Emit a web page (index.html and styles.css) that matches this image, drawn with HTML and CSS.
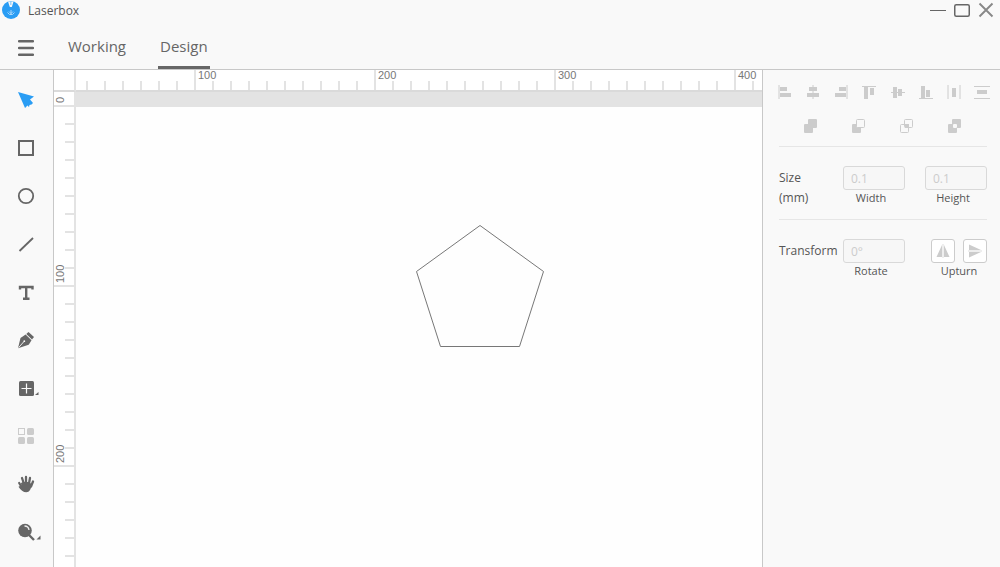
FILE: index.html
```html
<!DOCTYPE html>
<html lang="en">
<head>
<meta charset="utf-8">
<meta name="viewport" content="width=device-width, initial-scale=1">
<title>Laserbox</title>
<link rel="stylesheet" href="styles.css">
</head>
<body>
<div class="app">
  <header class="header">
    <div class="titlebar">
      <svg class="logo" width="18" height="18" viewBox="0 0 18 18" aria-hidden="true">
        <circle cx="9" cy="9" r="9" fill="#2a9df4"/>
        <path d="M6 0.5h5.5L9.8 6h-2z" fill="#f9f9f9"/>
        <path d="M8.2 0h1.2v4h-1.2z" fill="#8fcbf8"/>
        <path d="M9 9v5M5.500 11.500l2 2h3l2-2M7 10.500l2 2 2-2" fill="none" stroke="#a9d8fb"/>
      </svg>
      <span class="app-name">Laserbox</span>
      <div class="window-controls">
        <button class="icon-btn" aria-label="Minimize"><svg width="16" height="16"><path d="M0 8.500h16" stroke="#666"/></svg></button>
        <button class="icon-btn" aria-label="Maximize"><svg width="16" height="16"><rect x="0.750" y="2.750" width="14.500" height="11.500" rx="1.500" fill="none" stroke="#666" stroke-width="1.500"/></svg></button>
        <button class="icon-btn" aria-label="Close"><svg width="16" height="16"><path d="M1.500 1.500l13 13M14.500 1.500l-13 13" stroke="#888" stroke-width="1.900"/></svg></button>
      </div>
    </div>
    <nav class="tabs">
      <button class="icon-btn menu" aria-label="Menu"><svg width="16" height="16"><path d="M1 1.200h14M1 8h14M1 14.800h14" stroke="#666" stroke-width="2.400" stroke-linecap="round"/></svg></button>
      <a class="tab" href="#working">Working</a>
      <a class="tab active" href="#design">Design</a>
    </nav>
  </header>

  <div class="workspace">
    <aside class="toolbar">
      <button class="tool" aria-label="Select"><svg width="32" height="24"><path d="M8 4l16 4.500-4 3 3 3.500-1.500 1.500-2 .5-.5 2-1.500-1.500-2.500 2.500z" fill="#2a9df4"/></svg></button>
      <button class="tool" aria-label="Rectangle"><svg width="32" height="24"><rect x="9" y="5" width="14" height="14" fill="none" stroke="#666" stroke-width="2"/></svg></button>
      <button class="tool" aria-label="Ellipse"><svg width="32" height="24"><circle cx="16" cy="12" r="7.200" fill="none" stroke="#666" stroke-width="1.800"/></svg></button>
      <button class="tool" aria-label="Line"><svg width="32" height="24"><path d="M9.500 19L23 6" stroke="#666" stroke-width="1.800"/></svg></button>
      <button class="tool" aria-label="Text"><svg width="32" height="24"><path d="M10 9.500V7h12.500v2.500M16.200 7v12M13 18.700h6.500" fill="none" stroke="#666" stroke-width="2.400"/></svg></button>
      <button class="tool" aria-label="Pen"><svg width="32" height="24"><path d="M18.500 4l5.500 5-2 2.400-5.700-5.400z" fill="#666"/><path d="M15.600 6.600l5.900 5.600-2.800 4.600L8 20.200 10.500 10z" fill="#666"/><path d="M8.500 19.700l5.500-6.200" stroke="#f9f9f9" stroke-width="0.900"/><circle cx="14.300" cy="13.200" r="0.900" fill="#f9f9f9"/></svg></button>
      <button class="tool" aria-label="Add shape"><svg width="32" height="24"><rect x="9" y="5" width="15" height="15" rx="1.500" fill="#666"/><path d="M11.500 12.500h10M16.500 7.500v10" stroke="#f9f9f9" stroke-width="1.200"/><path d="M28.500 16v3h-3.500z" fill="#666"/></svg></button>
      <button class="tool" aria-label="Array" disabled><svg width="32" height="24" fill="#ccc"><rect x="8.500" y="4.500" width="6" height="6" fill="none" stroke="#ccc"/><rect x="17" y="4" width="7" height="7" rx="1.500"/><rect x="8" y="13" width="7" height="7" rx="1.500"/><rect x="17" y="13" width="7" height="7" rx="1.500"/></svg></button>
      <button class="tool" aria-label="Pan"><svg width="32" height="24"><path d="M9.200 11l3 5M12 6l2 6M16 5v7M20 6l-1.200 6.500M23 9.500l-2 5" stroke="#666" stroke-width="2.300" stroke-linecap="round"/><path d="M11 11l2-1h6.500l2 2.500c-.2 4.500-2 7.700-5.200 7.700-2.800 0-5.800-2-7.800-5.500l1.500-.8 1.500 1z" fill="#666"/></svg></button>
      <button class="tool" aria-label="Zoom"><svg width="32" height="24"><circle cx="15" cy="10.500" r="6.800" fill="#666"/><path d="M19 15l5 5" stroke="#666" stroke-width="2.400"/><path d="M14.500 6q4 0 4.500 4" fill="none" stroke="#eee" stroke-width="1.300"/><path d="M30.500 15.500v4h-4z" fill="#666"/></svg></button>
    </aside>

    <main class="stage">
      <div class="corner"></div>
      <svg class="ruler" width="100%" height="22">
        <defs>
          <pattern id="minor-x" x="10" width="18" height="22" patternUnits="userSpaceOnUse"><path d="M0 11h2v9h-2z" fill="#e3e3e3"/></pattern>
          <pattern id="major-x" x="118" width="180" height="22" patternUnits="userSpaceOnUse"><path d="M0 0h2v20h-2z" fill="#e3e3e3"/></pattern>
        </defs>
        <rect width="100%" height="22" fill="url(#minor-x)"/>
        <rect width="100%" height="22" fill="url(#major-x)"/>
        <rect y="20" width="100%" height="2" fill="#dadada"/>
        <text x="122" y="9">100</text><text x="302" y="9">200</text><text x="482" y="9">300</text><text x="662" y="9">400</text>
      </svg>
      <svg class="ruler" width="22" height="100%">
        <defs>
          <pattern id="minor-y" y="13" width="22" height="18" patternUnits="userSpaceOnUse"><path d="M11 0h9v2h-9z" fill="#e3e3e3"/></pattern>
          <pattern id="major-y" y="13" width="22" height="180" patternUnits="userSpaceOnUse"><path d="M0 0h20v2h-20z" fill="#e3e3e3"/></pattern>
        </defs>
        <rect width="22" height="100%" fill="url(#minor-y)"/>
        <rect width="22" height="100%" fill="url(#major-y)"/>
        <rect x="20" width="2" height="100%" fill="#e3e3e3"/>
        <text transform="translate(10 11) rotate(-90)">0</text>
        <text transform="translate(10 191) rotate(-90)">100</text>
        <text transform="translate(10 371) rotate(-90)">200</text>
      </svg>
      <svg class="canvas" width="100%" height="100%">
        <rect width="100%" height="15" fill="#e3e3e3"/>
        <path d="M404 133.500l63.500 46-24 75h-79l-24-75z" fill="none" stroke="#777"/>
      </svg>
    </main>

    <aside class="panel">
      <div class="align-row">
        <button class="icon-btn" disabled aria-label="Align left"><svg width="16" height="16"><path d="M2 1v14" stroke="#ccc"/><path d="M3 3h7v4h-7zM3 9h11v4h-11z"/></svg></button>
        <button class="icon-btn" disabled aria-label="Align center"><svg width="16" height="16"><path d="M8 1v14" stroke="#ccc"/><path d="M4 3h8v4h-8zM2 9h12v4h-12z"/></svg></button>
        <button class="icon-btn" disabled aria-label="Align right"><svg width="16" height="16"><path d="M14 1v14" stroke="#ccc"/><path d="M6 3h7v4h-7zM2 9h11v4h-11z"/></svg></button>
        <button class="icon-btn" disabled aria-label="Align top"><svg width="16" height="16"><path d="M1 2.500h14" stroke="#ccc"/><path d="M3 3h4v12h-4zM9 4h4v7h-4z"/></svg></button>
        <button class="icon-btn" disabled aria-label="Align middle"><svg width="16" height="16"><path d="M1 8.500h14" stroke="#ccc"/><path d="M3 3h4v11h-4zM8 5h4v7h-4z"/></svg></button>
        <button class="icon-btn" disabled aria-label="Align bottom"><svg width="16" height="16"><path d="M1 14.500h14" stroke="#ccc"/><path d="M3 2h4v12h-4zM8 6h4v7h-4z"/></svg></button>
        <button class="icon-btn" disabled aria-label="Distribute horizontally"><svg width="16" height="16"><path d="M2 1v14M14 1v14" stroke="#ccc"/><path d="M6 4h4v9h-4z"/></svg></button>
        <button class="icon-btn" disabled aria-label="Distribute vertically"><svg width="16" height="16"><path d="M0 2.500h16M0 14.500h16" stroke="#ccc"/><path d="M3 6h10v4h-10z"/></svg></button>
      </div>
      <div class="bool-row">
        <button class="icon-btn" disabled aria-label="Unite"><svg width="16" height="16"><rect x="1" y="6" width="9" height="9" rx="1"/><rect x="5" y="1" width="9" height="9" rx="1"/></svg></button>
        <button class="icon-btn" disabled aria-label="Subtract"><svg width="16" height="16"><rect x="1" y="6" width="9" height="9" rx="1"/><rect x="5.500" y="1.500" width="8" height="8" rx="1" fill="#f9f9f9" stroke="#ccc"/></svg></button>
        <button class="icon-btn" disabled aria-label="Intersect"><svg width="16" height="16"><rect x="6" y="6" width="4" height="4"/><rect x="1.500" y="6.500" width="8" height="8" rx="1" fill="none" stroke="#ccc"/><rect x="5.500" y="1.500" width="8" height="8" rx="1" fill="none" stroke="#ccc"/></svg></button>
        <button class="icon-btn" disabled aria-label="Exclude"><svg width="16" height="16"><rect x="1" y="6" width="9" height="9" rx="1"/><rect x="5" y="1" width="9" height="9" rx="1"/><rect x="6" y="6" width="4" height="4" rx="1" fill="#f9f9f9"/></svg></button>
      </div>
      <section class="group">
        <span class="group-label">Size (mm)</span>
        <div class="field"><input id="width" value="0.1" disabled><label for="width">Width</label></div>
        <div class="field"><input id="height" value="0.1" disabled><label for="height">Height</label></div>
      </section>
      <section class="group">
        <span class="group-label">Transform</span>
        <div class="field"><input id="rotate" value="0°" disabled><label for="rotate">Rotate</label></div>
        <div class="field" role="group" aria-labelledby="upturn">
          <div class="flips">
            <button class="flip" disabled aria-label="Flip horizontally"><svg width="16" height="16"><path d="M7 2v12H1.500zM9 2v12h5.500z"/><path d="M8 1v14" stroke="#ddd"/></svg></button>
            <button class="flip" disabled aria-label="Flip vertically"><svg width="16" height="16"><path d="M2 7V1.500l12 5.500zM2 9v5.500l12-5.500z"/><path d="M1 8h14" stroke="#ddd"/></svg></button>
          </div>
          <span class="caption" id="upturn">Upturn</span>
        </div>
      </section>
    </aside>
  </div>
</div>
</body>
</html>
```
FILE: styles.css
```css
* { box-sizing: border-box; }
body {
  margin: 0;
  font-family: "Open Sans", "Noto Sans", sans-serif;
  font-size: 12px;
  color: #555;
  background: #f9f9f9;
}
button { font: inherit; color: inherit; }
svg { display: block; }
.app { display: flex; flex-direction: column; height: 100vh; }
.header { border-bottom: 1px solid #c8c8c8; }
.titlebar { display: flex; align-items: center; height: 22px; padding: 0 6px 2px 2px; }
.app-name { margin-left: 8px; }
.window-controls { display: flex; gap: 8px; margin-left: auto; }
.icon-btn { display: block; padding: 0; border: 0; background: none; }
.tabs { display: flex; align-items: stretch; height: 47px; }
.menu { padding: 4px 18px 0; margin-right: 16px; }
.tab {
  display: flex;
  align-items: center;
  padding-top: 3px;
  border-bottom: 3px solid transparent;
  font-size: 15px;
  color: #666;
  text-decoration: none;
}
.tab.active {
  margin-left: 32px;
  padding-left: 2px;
  padding-right: 2px;
  border-bottom-color: #666;
  border-radius: 2px 2px 0 0;
}
.workspace { display: flex; flex: 1; min-height: 0; }
.toolbar { display: flex; flex-direction: column; width: 54px; padding-top: 6px; border-right: 1px solid #c8c8c8; }
.tool { display: flex; align-items: center; height: 48px; padding: 0 10px; border: 0; background: none; }
.stage {
  display: grid;
  flex: 1;
  min-width: 0;
  grid-template: 22px minmax(0, 1fr) / 22px minmax(0, 1fr);
  background: #fff;
}
.corner { border-right: 2px solid #e3e3e3; border-bottom: 2px solid #dadada; }
.ruler { font-family: "Liberation Sans", Arial, sans-serif; font-size: 11px; fill: #777; }
.canvas { background: #fefefe; }
.panel { width: 238px; padding: 14px 13px 0 16px; border-left: 1px solid #c8c8c8; }
.panel svg { fill: #ccc; }
.align-row { display: flex; justify-content: space-between; margin: 0 -3px 0 -2px; }
.bool-row { display: flex; justify-content: center; gap: 32px; padding: 18px 0 12px; }
.group { display: flex; justify-content: space-between; height: 73px; padding-top: 19px; border-top: 1px solid #e6e6e6; }
.group-label { width: 44px; padding-top: 2px; line-height: 20px; }
.field { display: flex; flex-direction: column; align-items: center; width: 62px; font-size: 11px; line-height: 16px; }
.field label { padding-right: 6px; }
.field .caption { padding-left: 6px; }
.field input {
  width: 62px;
  height: 24px;
  padding: 0 7px;
  border: 1px solid #d9d9d9;
  border-radius: 3px;
  background: #f7f7f7;
  font: inherit;
  font-size: 12px;
  color: #ccc;
}
.flips { display: flex; gap: 8px; align-self: flex-end; }
.flip { display: grid; place-items: center; width: 24px; height: 24px; padding: 0; border: 1px solid #ccc; border-radius: 3px; background: #fff; }
```
